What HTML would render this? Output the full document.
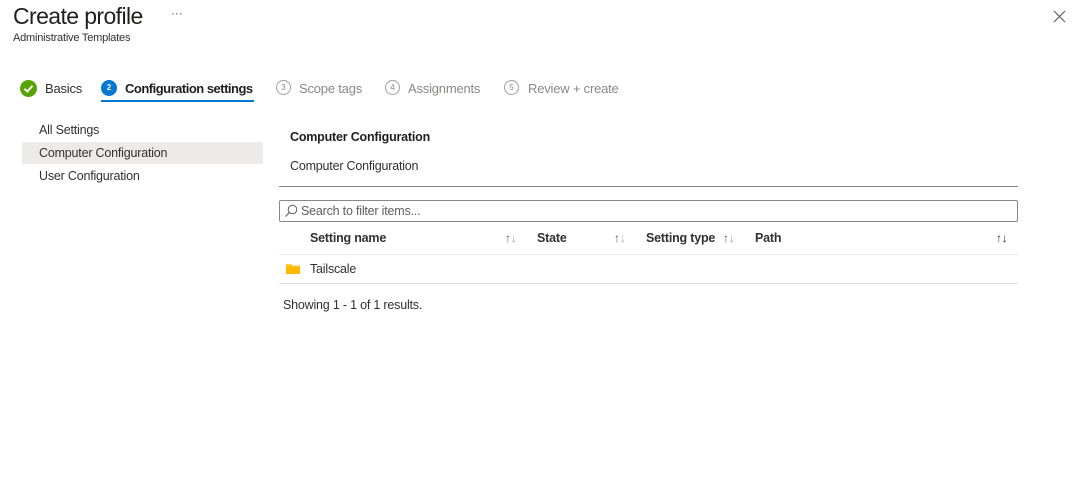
<!DOCTYPE html>
<html><head><style>
*{margin:0;padding:0;box-sizing:border-box}
body{width:1080px;height:482px;background:#fff;font-family:"Liberation Sans",sans-serif;color:#323130;position:relative;overflow:hidden;font-size:12.5px;letter-spacing:-0.2px}
.a{position:absolute;white-space:nowrap}
.circ{position:absolute;width:15px;height:15px;border-radius:50%;border:1px solid #a19f9d;font-size:8px;color:#8a8886;text-align:center;line-height:13px;letter-spacing:0}
.g{color:#8a8886;font-size:13px}
.sort{position:absolute;font-size:12px;color:#605e5c}
</style></head><body>
<div class="a" style="left:13px;top:3px;font-size:23px;color:#201f1e;letter-spacing:-0.6px">Create profile</div>
<div class="a" style="left:171px;top:6px;font-size:12px;color:#605e5c">···</div>
<div class="a" style="left:13px;top:32px;font-size:11px;color:#323130">Administrative Templates</div>
<svg class="a" style="left:1053px;top:10px" width="13" height="13"><path d="M1 1L12 12M12 1L1 12" stroke="#605e5c" stroke-width="1.2"/></svg>

<svg class="a" style="left:20px;top:80px" width="17" height="17"><circle cx="8.5" cy="8.5" r="8.5" fill="#57a300"/><path d="M4.5 8.8L7.3 11.5L12.5 5.8" stroke="#fff" stroke-width="2" fill="none"/></svg>
<div class="a" style="left:45px;top:81px;font-size:13px">Basics</div>
<div class="a" style="left:101px;top:80px;width:16px;height:16px;border-radius:50%;background:#0078d4;color:#fff;font-size:8px;text-align:center;line-height:16px;font-weight:bold;letter-spacing:0">2</div>
<div class="a" style="left:125px;top:81px;font-size:13px;font-weight:bold;color:#201f1e;letter-spacing:-0.5px">Configuration settings</div>
<div class="a" style="left:101px;top:100px;width:153px;height:2px;background:#0078d4"></div>
<div class="circ" style="left:276px;top:80px">3</div><div class="a g" style="left:299px;top:81px">Scope tags</div>
<div class="circ" style="left:385px;top:80px">4</div><div class="a g" style="left:408px;top:81px">Assignments</div>
<div class="circ" style="left:504px;top:80px">5</div><div class="a g" style="left:528px;top:81px">Review + create</div>

<div class="a" style="left:39px;top:123px">All Settings</div>
<div class="a" style="left:22px;top:142px;width:241px;height:22px;background:#edebe9"></div>
<div class="a" style="left:39px;top:146px">Computer Configuration</div>
<div class="a" style="left:39px;top:169px">User Configuration</div>

<div class="a" style="left:290px;top:130px;font-weight:bold;color:#201f1e">Computer Configuration</div>
<div class="a" style="left:290px;top:159px">Computer Configuration</div>
<div class="a" style="left:279px;top:186px;width:739px;height:1px;background:#8a8886"></div>
<div class="a" style="left:279px;top:200px;width:739px;height:22px;border:1px solid #8a8886;border-radius:2px"></div>
<svg class="a" style="left:284px;top:204px" width="14" height="14"><circle cx="8.5" cy="5.5" r="4.3" stroke="#605e5c" fill="none"/><path d="M5.5 8.5L1.5 12.5" stroke="#605e5c" stroke-width="1.2"/></svg>
<div class="a" style="left:301px;top:204px;color:#605e5c">Search to filter items...</div>

<div class="a" style="left:310px;top:231px;font-weight:bold">Setting name</div>
<div class="sort" style="left:505px;top:231px">↑<span style="color:#a19f9d">↓</span></div>
<div class="a" style="left:537px;top:231px;font-weight:bold">State</div>
<div class="sort" style="left:614px;top:231px">↑<span style="color:#a19f9d">↓</span></div>
<div class="a" style="left:646px;top:231px;font-weight:bold">Setting type</div>
<div class="sort" style="left:723px;top:231px">↑<span style="color:#a19f9d">↓</span></div>
<div class="a" style="left:755px;top:231px;font-weight:bold">Path</div>
<div class="sort" style="left:996px;top:231px;color:#323130">↑↓</div>
<div class="a" style="left:279px;top:254px;width:739px;height:1px;background:#edebe9"></div>
<svg class="a" style="left:286px;top:263px" width="14" height="12"><path d="M0 1h5l1.5 1.5H14V11H0z" fill="#ffc83d"/><path d="M0 3.5h14V11H0z" fill="#ffb900"/></svg>
<div class="a" style="left:310px;top:262px">Tailscale</div>
<div class="a" style="left:279px;top:283px;width:739px;height:1px;background:#e1dfdd"></div>
<div class="a" style="left:283px;top:298px">Showing 1 - 1 of 1 results.</div>
</body></html>
